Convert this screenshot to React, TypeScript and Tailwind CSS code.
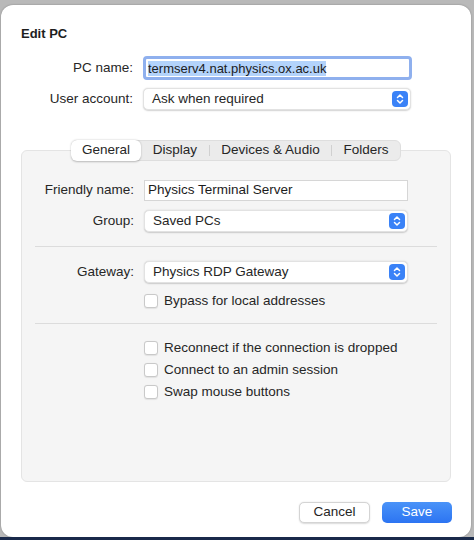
import React from 'react';

const font = { fontFamily: '"Liberation Sans", Arial, sans-serif' };

function Stepper() {
  return (
    <div className="w-[16px] h-[16px] rounded-[4px] bg-[#3a82f7] flex items-center justify-center">
      <svg width="8" height="12" viewBox="0 0 8 12" fill="none" stroke="white" strokeWidth="1.5" strokeLinecap="round" strokeLinejoin="round">
        <path d="M1.5 4.5 L4 2 L6.5 4.5" />
        <path d="M1.5 7.5 L4 10 L6.5 7.5" />
      </svg>
    </div>
  );
}

function Popup({ value, width }: { value: string; width: string }) {
  return (
    <div className={`${width} h-[22px] bg-white rounded-[5px] border border-[#e2e2e2] shadow-[0_0.5px_1.5px_rgba(0,0,0,0.18)] flex items-center justify-between pl-[8px] pr-[2px]`}>
      <span className="text-[13.5px] text-[#262626]">{value}</span>
      <Stepper />
    </div>
  );
}

function Checkbox({ label }: { label: string }) {
  return (
    <div className="flex items-center gap-[6px] h-[22px]">
      <div className="w-[14px] h-[14px] rounded-[3px] bg-white border border-[#c9c9c9] shadow-[0_0.5px_1px_rgba(0,0,0,0.08)]" />
      <span className="text-[13.5px] text-[#262626]">{label}</span>
    </div>
  );
}

const TABS = [
  { name: 'General', w: 'w-[70px]' },
  { name: 'Display', w: 'w-[68px]' },
  { name: 'Devices & Audio', w: 'w-[121px]' },
  { name: 'Folders', w: 'w-[68px]' },
];

export default function App() {
  return (
    <div className="w-[474px] h-[540px] bg-[#b9b9b9] flex flex-col" style={font}>
      <div className="ml-[1px] mt-[5px] w-[470px] h-[532px] bg-white rounded-[12px] shadow-[0_0_2px_rgba(0,0,0,0.3)] flex flex-col">
        <div className="pl-[20px] pt-[21px] text-[13px] font-bold text-[#1e1e1e] leading-[16px]">Edit PC</div>

        <div className="mt-[14px] grid grid-cols-[112px_1fr] gap-x-[10px] items-center pl-[20px]">
          <div className="text-right text-[13.5px] text-[#262626]">PC name:</div>
          <div className="w-[269px] h-[24px] rounded-[4px] border-[3px] border-[#8fb0ee] bg-white flex items-center pl-[2px]">
            <span className="text-[13px] text-[#1c1c1c] bg-[#b3d3fb] leading-[15px]">termserv4.nat.physics.ox.ac.uk</span>
          </div>
          <div className="text-right text-[13.5px] text-[#262626] mt-[8px]">User account:</div>
          <div className="mt-[8px]">
            <Popup value="Ask when required" width="w-[268px]" />
          </div>
        </div>

        <div className="mt-[40px] ml-[20px] w-[430px] relative">
          <div className="absolute left-0 right-0 -top-[10px] flex justify-center">
            <div className="h-[21px] rounded-[6px] bg-[#ebebeb] border border-[#dedede] flex items-center p-0">
              {TABS.map((t, i) => (
                <div key={t.name} className="flex items-center">
                  {i > 1 && <div className="w-px h-[11px] bg-[#d0d0d0]" />}
                  <div
                    className={`${t.w} h-[21px] flex items-center justify-center text-[13.5px] text-[#262626] ${
                      i === 0 ? 'bg-white rounded-[6px] shadow-[0_0.5px_2px_rgba(0,0,0,0.25)] -ml-px' : ''
                    }`}
                  >
                    {t.name}
                  </div>
                </div>
              ))}
            </div>
          </div>
          <div className="h-[332px] bg-[#f5f5f5] border border-[#e4e4e4] rounded-[6px] pt-[29px]">
            <div className="grid grid-cols-[112px_1fr] gap-x-[10px] items-center">
              <div className="text-right text-[13.5px] text-[#262626]">Friendly name:</div>
              <div className="w-[264px] h-[21px] bg-white border border-[#d6d6d6] flex items-center pl-[3px] text-[13.5px] text-[#1c1c1c]">
                Physics Terminal Server
              </div>
              <div className="text-right text-[13.5px] text-[#262626] mt-[9px]">Group:</div>
              <div className="mt-[9px]">
                <Popup value="Saved PCs" width="w-[264px]" />
              </div>
            </div>
            <div className="mx-[13px] mt-[14px] h-px bg-[#dcdcdc]" />
            <div className="mt-[14px] grid grid-cols-[112px_1fr] gap-x-[10px] items-center">
              <div className="text-right text-[13.5px] text-[#262626]">Gateway:</div>
              <Popup value="Physics RDP Gateway" width="w-[264px]" />
              <div />
              <div className="mt-[7px]">
                <Checkbox label="Bypass for local addresses" />
              </div>
            </div>
            <div className="mx-[13px] mt-[11px] h-px bg-[#dcdcdc]" />
            <div className="mt-[13px] pl-[122px] flex flex-col">
              <Checkbox label="Reconnect if the connection is dropped" />
              <Checkbox label="Connect to an admin session" />
              <Checkbox label="Swap mouse buttons" />
            </div>
          </div>
        </div>

        <div className="mt-[20px] mr-[19px] flex justify-end gap-[12px]">
          <div className="w-[71px] h-[21px] rounded-[5px] bg-white border border-[#d4d4d4] shadow-[0_0.5px_1.5px_rgba(0,0,0,0.15)] flex items-center justify-center text-[13.5px] text-[#262626]">
            Cancel
          </div>
          <div className="w-[70px] h-[21px] rounded-[5px] bg-gradient-to-b from-[#4a93f8] to-[#2c74f2] flex items-center justify-center text-[13.5px] text-white font-medium">
            Save
          </div>
        </div>
      </div>
      <div className="flex-1 bg-[#19294a]" />
    </div>
  );
}
